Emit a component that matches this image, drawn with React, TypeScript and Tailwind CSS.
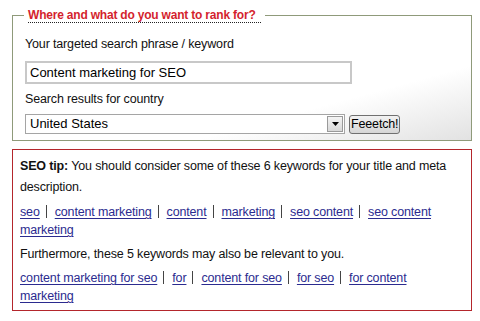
import React from "react";

const Sep = () => <span className="ml-[6px] mr-[8px] inline-block h-[13px] w-px bg-[#444] align-[-2px]" />;

const Link = ({ children }: { children: React.ReactNode }) => (
  <a href="#" className="text-[#2b2b8f] underline decoration-1 underline-offset-[2px]">
    {children}
  </a>
);

export default function App() {
  const l1 = ["seo", "content marketing", "content", "marketing", "seo content", "seo content marketing"];
  const l2 = ["content marketing for seo", "for", "content for seo", "for seo", "for content marketing"];
  return (
    <div
      className="h-[321px] w-[480px] bg-white pl-[12px] pt-[7px] text-[12.5px] tracking-[-0.15px] text-[#111]"
      style={{ fontFamily: '"Liberation Sans", Arial, sans-serif' }}
    >
      <fieldset className="relative m-0 w-[460px] border border-[#8f9a7a] bg-gradient-to-br from-white from-70% to-[#e2e2e2] px-[12px] pb-[6px] pt-0">
        <legend className="ml-[-1px] px-[4px] text-[12px] font-bold leading-[16px] tracking-[-0.2px] text-[#d41f2e]">
          <span className="inline-block border-b border-dotted border-[#222] pr-[5px] leading-[14px]">
            Where and what do you want to rank for?
          </span>
        </legend>
        <div className="mt-[13px] leading-[16px]">Your targeted search phrase / keyword</div>
        <input
          className="mt-[9px] block h-[23px] w-[327px] border-2 border-[#c8c8c8] px-[3px] text-[13px] tracking-normal text-black outline-none"
          defaultValue="Content marketing for SEO"
        />
        <div className="mt-[7px] leading-[16px]">Search results for country</div>
        <div className="mt-[7px] flex items-center gap-[4px]">
          <div className="flex h-[20px] w-[320px] items-center border border-[#a5a5a5] bg-white">
            <span className="flex-1 pl-[4px] text-[13px] tracking-normal text-black">United States</span>
            <span className="m-[1px] flex h-[16px] w-[16px] items-center justify-center border border-[#9a9a9a] bg-gradient-to-b from-[#f4f4f4] to-[#d8d8d8]">
              <svg width="7" height="4" viewBox="0 0 7 4">
                <path d="M0 0h7L3.5 4z" fill="#000" />
              </svg>
            </span>
          </div>
          <button className="h-[19px] rounded-[3px] border border-[#707070] bg-gradient-to-b from-[#f2f2f2] to-[#d6d6d6] px-[1px] text-[12.5px] leading-[16px] text-black">
            Feeetch!
          </button>
        </div>
      </fieldset>
      <div className="mt-[8px] w-[460px] border border-[#b4262c] pb-[5px] pl-[7px] pr-[16px] pt-[6px] leading-[21px]">
        <p>
          <b>SEO tip:</b> You should consider some of these 6 keywords for your title and meta description.
        </p>
        <p className="mt-[5px] leading-[18px]">
          {l1.map((k, i) => (
            <React.Fragment key={k}>
              {i > 0 && <Sep />}
              <Link>{k}</Link>
            </React.Fragment>
          ))}
        </p>
        <p className="mt-[5px]">Furthermore, these 5 keywords may also be relevant to you.</p>
        <p className="mt-[4px] leading-[18px]">
          {l2.map((k, i) => (
            <React.Fragment key={k}>
              {i > 0 && <Sep />}
              <Link>{k}</Link>
            </React.Fragment>
          ))}
        </p>
      </div>
    </div>
  );
}
